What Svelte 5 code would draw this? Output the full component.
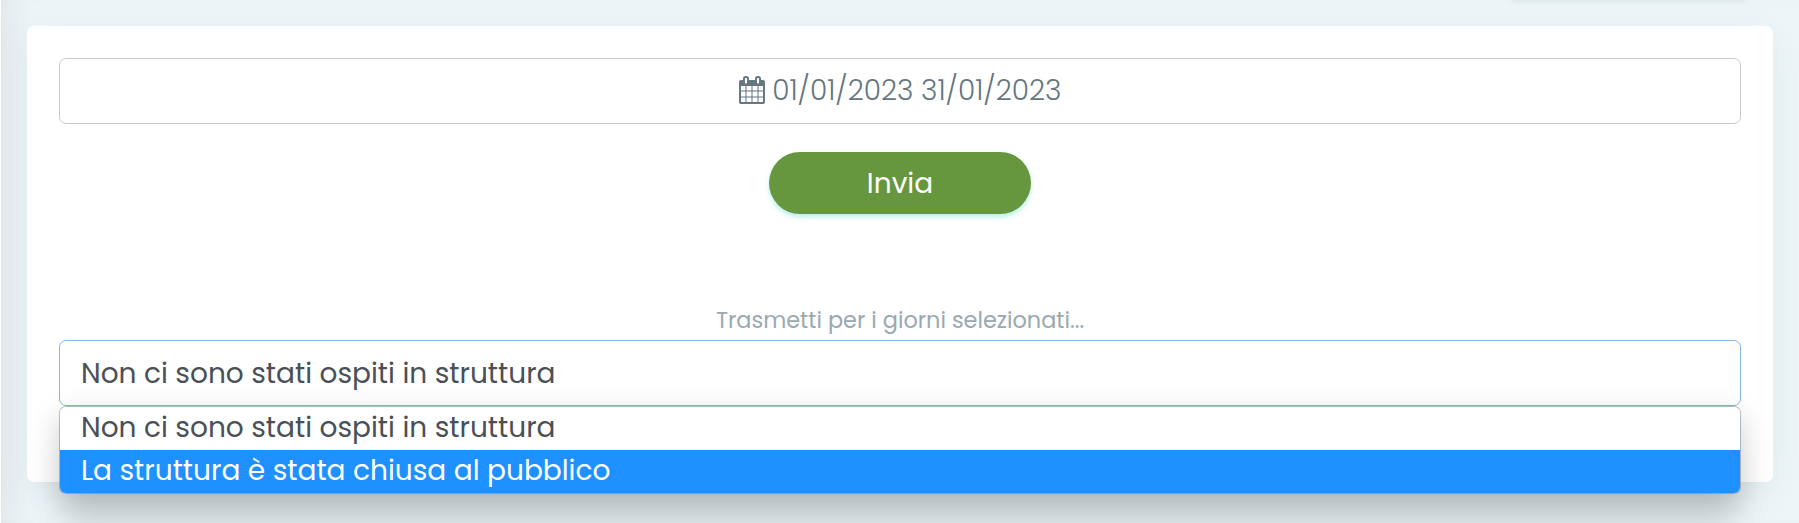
<script>
  const period = "01/01/2023 31/01/2023";
  const options = [
    "Non ci sono stati ospiti in struttura",
    "La struttura è stata chiusa al pubblico",
  ];

  let selected = 0;
  let highlighted = 1;
  let open = true;

  function choose(index) {
    selected = index;
    highlighted = index;
    open = false;
  }
</script>

<div class="page">
  <div class="toolbar">
    <div class="toolbar-box"></div>
  </div>
  <div class="card">
    <button class="date-range">
      <svg class="calendar" viewBox="0 0 1664 1792" aria-hidden="true">
        <path d="M128 1664h288v-288H128v288zm352 0h320v-288H480v288zm-352-352h288V992H128v320zm352 0h320V992H480v320zM128 928h288V640H128v288zm736 736h320v-288H864v288zM480 928h320V640H480v288zm768 736h288v-288h-288v288zm-384-352h320V992H864v320zM512 448V160q0-13-9.500-22.500T480 128h-64q-13 0-22.500 9.500T384 160v288q0 13 9.500 22.500T416 480h64q13 0 22.500-9.500T512 448zm736 864h288V992h-288v320zM864 928h320V640H864v288zm384 0h288V640h-288v288zm32-480V160q0-13-9.500-22.500T1248 128h-64q-13 0-22.500 9.500T1152 160v288q0 13 9.500 22.500t22.500 9.500h64q13 0 22.500-9.500T1280 448zm384-64v1280q0 52-38 90t-90 38H128q-52 0-90-38t-38-90V384q0-52 38-90t90-38h128v-96q0-66 47-113T416 0h64q66 0 113 47t47 113v96h384v-96q0-66 47-113T1184 0h64q66 0 113 47t47 113v96h128q52 0 90 38t38 90z" />
      </svg>
      <span>{period}</span>
    </button>

    <button class="submit">Invia</button>

    <label for="reason">Trasmetti per i giorni selezionati...</label>
    <div class="select">
      <button id="reason" class="select-value" on:click={() => (open = !open)}>
        {options[selected]}
      </button>
      {#if open}
        <ul class="menu">
          {#each options as option, index}
            <li>
              <button
                class="option"
                class:highlighted={index === highlighted}
                on:mouseenter={() => (highlighted = index)}
                on:click={() => choose(index)}
              >
                {option}
              </button>
            </li>
          {/each}
        </ul>
      {/if}
    </div>
  </div>
</div>

<style>
  :global(body) {
    background: #edf5f8;
    overflow: hidden;
  }

  .page {
    box-sizing: border-box;
    height: 523px;
    padding: 0 26px;
    border-left: 1px solid #fff;
    box-shadow: inset 24px 0 22px -12px rgba(210, 210, 216, 0.4);
    font-family: Poppins, Inter, "Open Sans", sans-serif;
  }

  .toolbar {
    display: flex;
    justify-content: flex-end;
    height: 26px;
    padding-right: 28px;
    overflow: hidden;
  }

  .toolbar-box {
    width: 232px;
    height: 0;
    border-radius: 8px;
    box-shadow: 0 0 4px 1px rgba(60, 70, 80, 0.14);
  }

  .card {
    box-sizing: border-box;
    display: flex;
    flex-direction: column;
    height: 456px;
    padding: 32px;
    border-radius: 7px;
    background: #fff;
    box-shadow: 0 10px 36px rgba(70, 90, 100, 0.07);
  }

  button {
    box-sizing: border-box;
    margin: 0;
    padding: 0;
    font-family: inherit;
    font-size: 28px;
    cursor: pointer;
  }

  .date-range {
    display: flex;
    align-items: center;
    justify-content: center;
    gap: 7.5px;
    flex: none;
    height: 66px;
    border: 1px solid #c9cacc;
    border-radius: 7px;
    background: #fff;
    color: #657780;
    font-weight: 300;
  }

  .calendar {
    width: 26px;
    height: 28px;
    margin-bottom: 2px;
    fill: #657780;
  }

  .submit {
    align-self: center;
    flex: none;
    width: 262px;
    height: 62px;
    margin-top: 28px;
    padding-top: 2px;
    border: 0;
    border-radius: 31px;
    background: #66973f;
    box-shadow: 0 3px 5px rgba(120, 225, 215, 0.5);
    color: #fff;
  }

  label {
    margin-top: 91px;
    color: #9aa9b1;
    font-size: 22.4px;
    line-height: 30px;
    text-align: center;
  }

  .select {
    position: relative;
    margin-top: 5px;
  }

  .select-value {
    display: block;
    width: 100%;
    height: 66px;
    padding: 2px 21px 0;
    border: 1px solid #86b7e8;
    border-radius: 7px;
    background: #fff;
    color: #495057;
    text-align: left;
  }

  .menu {
    position: absolute;
    top: 66px;
    left: 0;
    right: 0;
    margin: 0;
    padding: 0;
    border: 1px solid rgba(110, 130, 145, 0.5);
    border-radius: 7px;
    background: #fff;
    background-clip: padding-box;
    box-shadow: 0 46px 30px -8px rgba(0, 0, 0, 0.07), 0 12px 32px rgba(0, 0, 0, 0.2);
    list-style: none;
    overflow: hidden;
  }

  .option {
    display: block;
    width: 100%;
    height: 43px;
    padding: 0 21px 2px;
    border: 0;
    background: #fff;
    color: #495057;
    line-height: 41px;
    text-align: left;
  }

  .option.highlighted {
    background: #1e90ff;
    color: #fff;
  }
</style>
